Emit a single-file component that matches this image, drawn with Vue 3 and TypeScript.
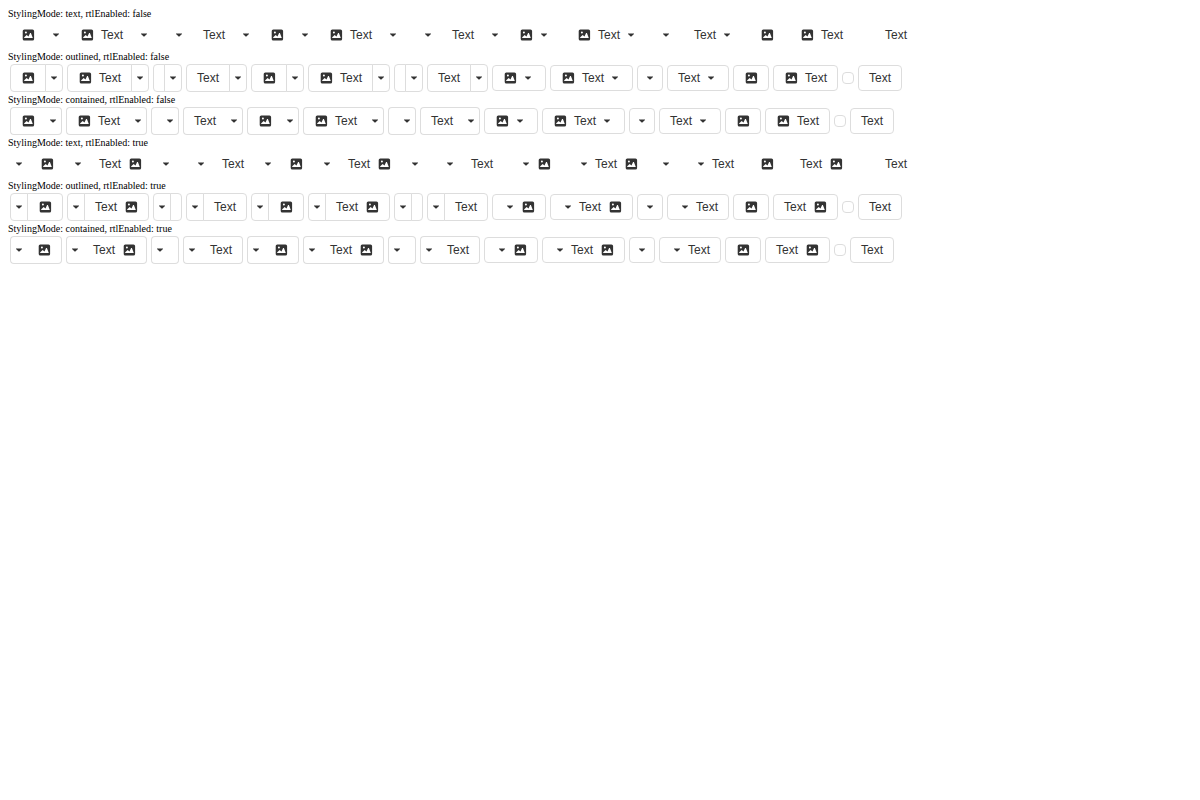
<script setup lang="ts">
type Kind = 'split' | 'drop' | 'plain'

interface Item {
  kind: Kind
  icon: boolean
  text: string
}

interface Section {
  mode: 'text' | 'outlined' | 'contained'
  rtl: boolean
}

const contents = [
  { icon: true, text: '' },
  { icon: true, text: 'Text' },
  { icon: false, text: '' },
  { icon: false, text: 'Text' },
]
const kinds: Kind[] = ['split', 'split', 'drop', 'plain']
const items: Item[] = kinds.flatMap((kind) => contents.map((c) => ({ kind, ...c })))

const sections: Section[] = [false, true].flatMap((rtl) =>
  (['text', 'outlined', 'contained'] as const).map((mode) => ({ mode, rtl })),
)
</script>

<template>
  <main class="page">
    <section v-for="s in sections" :key="`${s.mode}-${s.rtl}`">
      <div class="caption">StylingMode: {{ s.mode }}, rtlEnabled: {{ s.rtl }}</div>
      <div class="row" :class="s.mode">
        <div
          v-for="(item, i) in items"
          :key="i"
          class="widget"
          :class="item.kind"
          :dir="s.rtl ? 'rtl' : 'ltr'"
        >
          <button
            type="button"
            class="btn main"
            :class="{ empty: !item.icon && !item.text }"
            :aria-label="item.text || 'Button'"
          >
            <svg v-if="item.icon" class="icon" viewBox="0 0 14 14" aria-hidden="true">
              <path
                fill-rule="evenodd"
                d="M3.300 1.500h8.200a1.600 1.600 0 0 1 1.600 1.600v7.800a1.600 1.600 0 0 1-1.600 1.600H3.300A1.600 1.600 0 0 1 1.700 10.900V3.100A1.600 1.600 0 0 1 3.300 1.500zM4.900 3.500a1 1 0 1 0 0 2a1 1 0 0 0 0-2zM3.200 10.100h8.600L9.900 4.900H9.100L7.500 8.600L5.700 6.900L3.200 9.300z"
              />
            </svg>
            <span v-if="item.text" class="label" :class="{ spaced: item.icon }">{{ item.text }}</span>
            <svg
              v-if="item.kind === 'drop'"
              class="icon arrow"
              :class="{ after: item.icon || item.text }"
              viewBox="0 0 14 14"
              aria-hidden="true"
            >
              <path d="M4 5.400h6v.6L7.400 8.600h-.8L4 6z" />
            </svg>
          </button>
          <button v-if="item.kind === 'split'" type="button" class="btn toggle" aria-label="Open menu">
            <svg class="icon" viewBox="0 0 14 14" aria-hidden="true">
              <path d="M4 5.400h6v.6L7.400 8.600h-.8L4 6z" />
            </svg>
          </button>
        </div>
      </div>
    </section>
  </main>
</template>

<style>
body {
  margin: 0;
  background: #fff;
}
</style>

<style scoped>
.page {
  padding: 8px;
  font-family: "Liberation Serif", "Times New Roman", serif;
  color: #000;
}

.caption {
  font-size: 10px;
  line-height: 11px;
}

.row {
  display: flex;
  align-items: center;
  gap: 4px;
  padding: 2px;
}

.widget {
  display: flex;
  flex: none;
}

.btn {
  box-sizing: border-box;
  display: flex;
  align-items: center;
  justify-content: center;
  height: 26px;
  margin: 0;
  padding: 0 10px;
  border: 1px solid #ddd;
  border-radius: 4px;
  background: #fff;
  color: #333;
  font: 12px/16px "Liberation Sans", Arial, sans-serif;
  cursor: pointer;
}

.split .btn {
  height: 28px;
}

.icon {
  display: block;
  flex: none;
  width: 14px;
  height: 14px;
  fill: #333;
}

.spaced {
  margin-inline-start: 7px;
}

.after {
  margin-inline-start: 4px;
}

.btn.empty {
  padding: 0 5px;
}

.plain .empty {
  height: 12px;
}

.btn.toggle {
  padding: 0 1px;
}

.split .main {
  border-start-end-radius: 0;
  border-end-end-radius: 0;
}

.split .toggle {
  border-start-start-radius: 0;
  border-end-start-radius: 0;
}

.outlined .toggle {
  margin-inline-start: -1px;
}

.contained .split .main {
  border-inline-end-width: 0;
}

.contained .toggle {
  border-inline-start-width: 0;
}

.text .btn {
  border-color: transparent;
  background: transparent;
}

.text .toggle {
  margin-inline-start: 1px;
}
</style>
